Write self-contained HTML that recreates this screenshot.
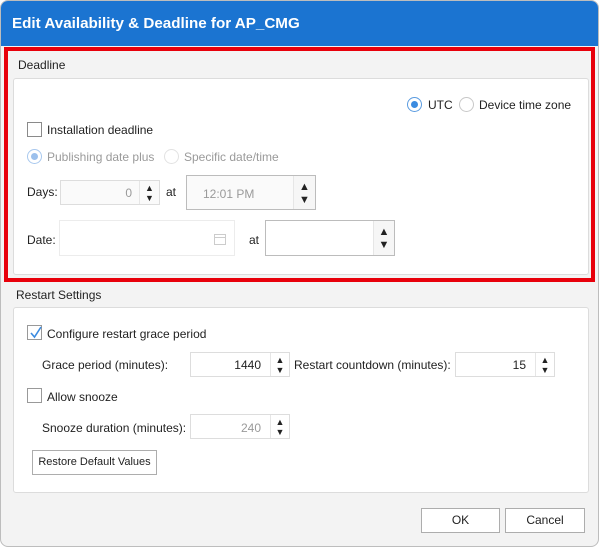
<!DOCTYPE html>
<html><head><style>
*{box-sizing:border-box;margin:0;padding:0}
body{width:600px;height:548px;background:#fff;font-family:"Liberation Sans",sans-serif;font-size:12px;color:#222;position:relative;overflow:hidden}
.win{position:absolute;left:0;top:0;width:599px;height:547px;background:#f3f3f3;border:1px solid #bdbdbd;border-radius:8px;overflow:hidden}
.title{position:absolute;left:0;top:0;width:100%;height:45px;background:#1b74d1;color:#fff;font-weight:bold;font-size:15.2px;padding:14px 0 0 11px}
.a{position:absolute;white-space:nowrap}
.panel{position:absolute;background:#fff;border:1px solid #dcdcdc;border-radius:3px}
.red{position:absolute;left:3px;top:46px;width:591px;height:235px;border:4px solid #e8000b}
.cb{position:absolute;width:15px;height:15px;border:1px solid #8a8a8a;background:#fff}
.rb{position:absolute;width:15px;height:15px;border-radius:50%;border:1px solid #c8c8c8;background:#fff}
.rb.on{border:1.5px solid #5a9be0}
.rb.on::after{content:"";position:absolute;left:2.5px;top:2.5px;width:7px;height:7px;border-radius:50%;background:#3b8be0}
.rb.dis.on{border-color:#a8c8ee}.rb.dis.on::after{background:#9cc0ec}
.in{position:absolute;background:#fff;border:1px solid #ddd}
.sp{position:absolute;top:0;bottom:0;right:0;border-left:1px solid #e6e6e6;font-size:9px;line-height:10px;text-align:center;color:#222}
.dis{color:#9a9a9a}
.btn{position:absolute;border:1px solid #adadad;background:#fff;text-align:center;line-height:22px}
</style></head><body>
<div class="win">
<div class="title">Edit Availability &amp; Deadline for AP_CMG</div>
<div class="a" style="left:17px;top:57px">Deadline</div>
<div class="panel" style="left:12px;top:77px;width:576px;height:197px"></div>
<div class="rb on" style="left:406px;top:96px"></div><div class="a" style="left:427px;top:97px">UTC</div>
<div class="rb" style="left:458px;top:96px"></div><div class="a" style="left:478px;top:97px">Device time zone</div>
<div class="cb" style="left:26px;top:121px"></div><div class="a" style="left:46px;top:122px">Installation deadline</div>
<div class="rb dis on" style="left:26px;top:148px"></div><div class="a dis" style="left:46px;top:149px">Publishing date plus</div>
<div class="rb" style="left:163px;top:148px;border-color:#e2e2e2"></div><div class="a dis" style="left:183px;top:149px">Specific date/time</div>
<div class="a" style="left:26px;top:184px">Days:</div>
<div class="in" style="left:59px;top:179px;width:100px;height:25px;background:#fafafa"><div class="a dis" style="right:27px;top:5px">0</div><div class="sp" style="width:20px;padding-top:2px">▲<br>▼</div></div>
<div class="a" style="left:165px;top:184px">at</div>
<div class="in" style="left:185px;top:174px;width:130px;height:35px;border-color:#bcbcbc;background:#fafafa"><div class="a dis" style="left:16px;top:11px">12:01 PM</div><div class="sp" style="width:22px;padding-top:5px;font-size:11px;line-height:13px;background:#f6f6f6">▲<br>▼</div></div>
<div class="a" style="left:26px;top:232px">Date:</div>
<div class="in" style="left:58px;top:219px;width:176px;height:36px;border-color:#ececec">
<svg class="a" style="left:153px;top:11px" width="14" height="14"><rect x="1.5" y="2.5" width="11" height="10" fill="none" stroke="#ccc"/><line x1="1.5" y1="5.5" x2="12.5" y2="5.5" stroke="#ccc"/></svg></div>
<div class="a" style="left:248px;top:232px">at</div>
<div class="in" style="left:264px;top:219px;width:130px;height:36px;border-color:#bcbcbc"><div class="sp" style="width:21px;padding-top:5px;font-size:11px;line-height:13px;background:#f6f6f6">▲<br>▼</div></div>
<div class="red"></div>
<div class="a" style="left:15px;top:287px">Restart Settings</div>
<div class="panel" style="left:12px;top:306px;width:576px;height:186px"></div>
<div class="cb" style="left:26px;top:324px;border-color:#999"><svg style="position:absolute;left:2px;top:0px" width="12" height="13"><path d="M1 7 L4.5 11 L11 1" fill="none" stroke="#3b8be0" stroke-width="1.6"/></svg></div>
<div class="a" style="left:46px;top:326px">Configure restart grace period</div>
<div class="a" style="left:41px;top:357px">Grace period (minutes):</div>
<div class="in" style="left:189px;top:351px;width:100px;height:25px"><div class="a" style="right:28px;top:5px">1440</div><div class="sp" style="width:19px;padding-top:2px">▲<br>▼</div></div>
<div class="a" style="left:293px;top:357px">Restart countdown (minutes):</div>
<div class="in" style="left:454px;top:351px;width:100px;height:25px"><div class="a" style="right:28px;top:5px">15</div><div class="sp" style="width:19px;padding-top:2px">▲<br>▼</div></div>
<div class="cb" style="left:26px;top:387px;border-color:#999"></div><div class="a" style="left:46px;top:389px">Allow snooze</div>
<div class="a" style="left:41px;top:420px">Snooze duration (minutes):</div>
<div class="in" style="left:189px;top:413px;width:100px;height:25px"><div class="a dis" style="right:28px;top:6px">240</div><div class="sp" style="width:19px;padding-top:2px">▲<br>▼</div></div>
<div class="btn" style="left:31px;top:449px;width:125px;height:25px;font-size:11px">Restore Default Values</div>
<div class="btn" style="left:420px;top:507px;width:79px;height:25px">OK</div>
<div class="btn" style="left:504px;top:507px;width:80px;height:25px">Cancel</div>
</div>
</body></html>
